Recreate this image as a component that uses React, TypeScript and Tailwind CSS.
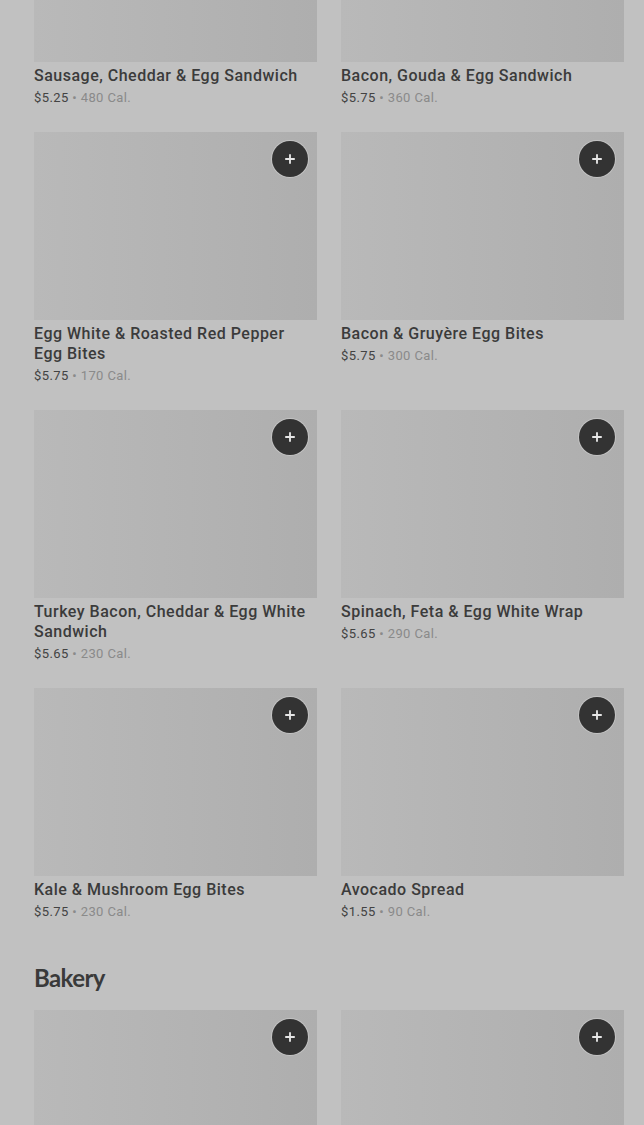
import { Plus } from "lucide-react";

type Item = { name: string; price: string; cal: string };

const breakfast: Item[] = [
  { name: "Sausage, Cheddar & Egg Sandwich", price: "$5.25", cal: "480 Cal." },
  { name: "Bacon, Gouda & Egg Sandwich", price: "$5.75", cal: "360 Cal." },
  { name: "Egg White & Roasted Red Pepper Egg Bites", price: "$5.75", cal: "170 Cal." },
  { name: "Bacon & Gruyère Egg Bites", price: "$5.75", cal: "300 Cal." },
  { name: "Turkey Bacon, Cheddar & Egg White Sandwich", price: "$5.65", cal: "230 Cal." },
  { name: "Spinach, Feta & Egg White Wrap", price: "$5.65", cal: "290 Cal." },
  { name: "Kale & Mushroom Egg Bites", price: "$5.75", cal: "230 Cal." },
  { name: "Avocado Spread", price: "$1.55", cal: "90 Cal." },
];

function ItemImage() {
  return (
    <div className="relative h-[188px] w-full bg-gradient-to-r from-[#b9b9b9] to-[#aeaeae]">
      <button className="absolute right-[9px] top-[9px] flex h-[36px] w-[36px] items-center justify-center rounded-full bg-[#333333] text-[#e6e6e6] ring-1 ring-[#d0d0d0]/60">
        <Plus size={14} strokeWidth={3.2} />
      </button>
    </div>
  );
}

function MenuCard({ item }: { item: Item }) {
  return (
    <div className="flex flex-col">
      <ItemImage />
      <p className="mt-[4px] text-[16px] font-medium leading-[20px] tracking-[0.5px] text-[#3b3b3b] [font-family:Roboto,sans-serif]">
        {item.name}
      </p>
      <p className="mt-[2px] text-[13px] leading-[20px] tracking-[0.4px] [font-family:Roboto,sans-serif]">
        <span className="text-[#434343]">{item.price}</span>
        <span className="text-[#8a8a8a]"> • {item.cal}</span>
      </p>
    </div>
  );
}

export default function App() {
  return (
    <div className="h-[1125px] w-full overflow-hidden bg-[#c1c1c1]">
      <div className="mt-[-126px] pl-[34px] pr-[20px]">
        <div className="grid grid-cols-2 gap-x-6 gap-y-6">
          {breakfast.map((it) => (
            <MenuCard key={it.name} item={it} />
          ))}
        </div>

        <h2 className="mt-[41px] mb-[17px] text-[24px] font-bold leading-[30px] tracking-tight text-[#3a3a3a] [font-family:Lato,sans-serif]">
          Bakery
        </h2>

        {/* bakery items: only the image tops are in view */}
        <div className="grid grid-cols-2 gap-x-6">
          <ItemImage />
          <ItemImage />
        </div>
      </div>
    </div>
  );
}
